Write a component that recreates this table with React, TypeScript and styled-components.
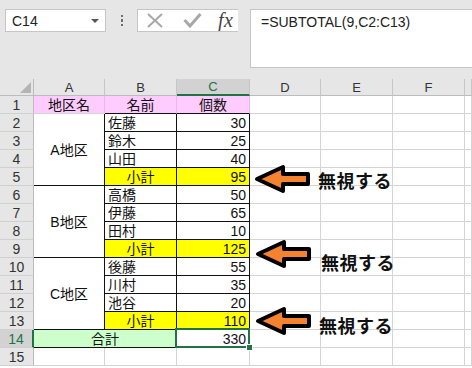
import React from 'react';
import styled, { createGlobalStyle } from 'styled-components';

const GlobalStyle = createGlobalStyle`
	html,
	body {
		margin: 0;
		padding: 0;
		background: #fff;
	}
	body {
		font-family: 'Liberation Sans', 'Noto Sans CJK JP', sans-serif;
	}
`;

const GRID = '#d4d4d4';
const INK = '#111';
const EXCEL_GREEN = '#217346';

const Page = styled.div`
	width: 472px;
	height: 368px;
	overflow: hidden;
	display: flex;
	flex-direction: column;
	background: #fff;
`;

/* ---------- formula bar ---------- */

const FormulaBar = styled.div`
	flex: none;
	height: 79px;
	box-sizing: border-box;
	background: #e6e6e6;
	display: flex;
	align-items: flex-start;
	padding: 9px 0 0 5px;
`;

const NameBox = styled.div`
	flex: none;
	width: 101px;
	height: 23px;
	box-sizing: border-box;
	background: #fff;
	border: 1px solid #c6c6c6;
	display: flex;
	align-items: center;
	justify-content: space-between;
	padding: 0 6px 0 6px;
	font-size: 14px;
	color: #222;
`;

const DropCaret = styled.span`
	width: 0;
	height: 0;
	border-left: 4px solid transparent;
	border-right: 4px solid transparent;
	border-top: 4px solid #555;
`;

const Grip = styled.div`
	flex: none;
	width: 31px;
	height: 23px;
	display: flex;
	flex-direction: column;
	align-items: center;
	justify-content: center;
	gap: 2px;

	span {
		width: 2px;
		height: 2.5px;
		background: #6e6e6e;
	}
`;

const ActionBox = styled.div`
	flex: none;
	width: 101px;
	height: 23px;
	box-sizing: border-box;
	background: #fff;
	border: 1px solid #c6c6c6;
	border-right: none;
	display: flex;
	align-items: center;
	padding-left: 9px;
	overflow: hidden;
`;

const ActionIcon = styled.svg<{ $gap: number }>`
	flex: none;
	margin-right: ${(p) => p.$gap}px;
`;

const FxMark = styled.span`
	font-family: 'Liberation Serif', serif;
	font-style: italic;
	font-size: 20px;
	line-height: 1;
	color: #444;
	letter-spacing: 0.5px;
	margin-top: -2px;
`;

const FormulaInput = styled.div`
	flex: none;
	width: 240px;
	height: 59px;
	margin-left: 12px;
	box-sizing: border-box;
	background: #fff;
	border: 1px solid #c6c6c6;
	padding: 4px 0 0 10px;
	font-size: 14px;
	line-height: 17px;
	color: #222;
`;

/* ---------- worksheet ---------- */

const SheetArea = styled.div`
	position: relative;
	flex: 1;
	overflow: hidden;
`;

const Grid = styled.div`
	display: grid;
	grid-template-columns: 34px 71px 72px 73px 71px 72px 72px 1fr;
	grid-template-rows: 17px repeat(15, 18px);
`;

const Corner = styled.div`
	position: relative;
	background: #e6e6e6;
	border-right: 1px solid #bcbcbc;
	border-bottom: 1px solid #bcbcbc;
	box-sizing: border-box;

	&::after {
		content: '';
		position: absolute;
		right: 2px;
		bottom: 2px;
		width: 0;
		height: 0;
		border-left: 11px solid transparent;
		border-bottom: 11px solid #b4b4b4;
	}
`;

const ColHead = styled.div<{ $active?: boolean }>`
	box-sizing: border-box;
	display: flex;
	align-items: center;
	justify-content: center;
	font-size: 13px;
	color: ${(p) => (p.$active ? EXCEL_GREEN : '#333')};
	background: ${(p) => (p.$active ? '#d2d2d2' : '#e6e6e6')};
	border-right: 1px solid #c6c6c6;
	border-bottom: ${(p) => (p.$active ? `2px solid ${EXCEL_GREEN}` : '1px solid #bcbcbc')};
`;

const RowHead = styled.div<{ $active?: boolean }>`
	box-sizing: border-box;
	display: flex;
	align-items: center;
	justify-content: center;
	padding-top: 1px;
	font-size: 14px;
	color: ${(p) => (p.$active ? EXCEL_GREEN : '#333')};
	background: ${(p) => (p.$active ? '#d2d2d2' : '#e6e6e6')};
	border-right: ${(p) => (p.$active ? `2px solid ${EXCEL_GREEN}` : '1px solid #bcbcbc')};
	border-bottom: 1px solid #d0d0d0;
`;

type Align = 'left' | 'center' | 'right';

const justify: Record<Align, string> = {
	left: 'flex-start',
	center: 'center',
	right: 'flex-end',
};

const Cell = styled.div<{
	$bg: string;
	$align: Align;
	$right: string;
	$bottom: string;
	$rows: number;
	$cols: number;
}>`
	grid-row: span ${(p) => p.$rows};
	grid-column: span ${(p) => p.$cols};
	box-sizing: border-box;
	display: flex;
	align-items: center;
	justify-content: ${(p) => justify[p.$align]};
	padding: 1px 3px 0 3px;
	background: ${(p) => p.$bg};
	border-right: 1px solid ${(p) => p.$right};
	border-bottom: 1px solid ${(p) => p.$bottom};
	font-size: 14px;
	line-height: 17px;
	color: ${INK};
	white-space: nowrap;
`;

const ActiveCell = styled(Cell)`
	position: relative;
	z-index: 2;

	&::after {
		content: '';
		position: absolute;
		top: -2px;
		left: -2px;
		right: -1px;
		bottom: -1px;
		border: 2px solid ${EXCEL_GREEN};
		pointer-events: none;
	}
	&::before {
		content: '';
		position: absolute;
		right: -4px;
		bottom: -4px;
		width: 5px;
		height: 5px;
		background: ${EXCEL_GREEN};
		border: 1px solid #fff;
		z-index: 1;
	}
`;

/* ---------- annotations ---------- */

const Callout = styled.div<{ $top: number; $left: number }>`
	position: absolute;
	top: ${(p) => p.$top}px;
	left: ${(p) => p.$left}px;
	display: flex;
	align-items: center;
`;

const CalloutLabel = styled.span<{ $gap: number; $drop: number }>`
	margin-left: ${(p) => p.$gap}px;
	margin-top: ${(p) => p.$drop * 2}px;
	font-family: 'Noto Sans CJK JP', sans-serif;
	font-weight: 700;
	font-size: 18px;
	line-height: 1;
	letter-spacing: 0.5px;
	color: #111;
`;

function LeftArrow() {
	return (
		<svg width='58' height='30' viewBox='0 0 58 30'>
			<polygon
				points='3,15 29,3 29,10 54,10 54,20 29,20 29,27'
				fill='#f4822f'
				stroke='#000'
				strokeWidth='4'
				strokeLinejoin='round'
			/>
		</svg>
	);
}

/* ---------- data ---------- */

type CellSpec = {
	text?: string;
	bg?: string;
	align?: Align;
	right?: string;
	bottom?: string;
	rows?: number;
	cols?: number;
	active?: boolean;
};

const PINK = '#ffccff';
const YELLOW = '#ffff00';
const MINT = '#ccffcc';

const header = (text: string, edge: string): CellSpec => ({
	text,
	bg: PINK,
	align: 'center',
	right: '#e8b8e8',
	bottom: edge,
});
const region = (text: string): CellSpec => ({ text, align: 'center', rows: 4, right: INK, bottom: INK });
const person = (text: string): CellSpec => ({ text, align: 'left', right: INK, bottom: INK });
const count = (text: string): CellSpec => ({ text, align: 'right', right: INK, bottom: INK });
const subtotalLabel: CellSpec = { text: '小計', bg: YELLOW, align: 'center', right: INK, bottom: INK };
const subtotal = (text: string): CellSpec => ({ text, bg: YELLOW, align: 'right', right: INK, bottom: INK });

const tableRows: CellSpec[][] = [
	[header('地区名', GRID), header('名前', INK), header('個数', INK)],
	[region('A地区'), person('佐藤'), count('30')],
	[person('鈴木'), count('25')],
	[person('山田'), count('40')],
	[subtotalLabel, subtotal('95')],
	[region('B地区'), person('高橋'), count('50')],
	[person('伊藤'), count('65')],
	[person('田村'), count('10')],
	[subtotalLabel, subtotal('125')],
	[region('C地区'), person('後藤'), count('55')],
	[person('川村'), count('35')],
	[person('池谷'), count('20')],
	[subtotalLabel, subtotal('110')],
	[
		{ text: '合計', bg: MINT, align: 'center', cols: 2, right: INK, bottom: INK },
		{ text: '330', align: 'right', right: INK, bottom: INK, active: true },
	],
	[],
];

// the G column only peeks in at the right edge, so its letter is off-screen
const columns = ['A', 'B', 'C', 'D', 'E', 'F', ''];
const ACTIVE_COL = 'C';
const ACTIVE_ROW = 14;

function Sheet() {
	const cells: React.ReactNode[] = [<Corner key='corner' />];
	columns.forEach((c, i) =>
		cells.push(
			<ColHead key={`h${i}`} $active={c === ACTIVE_COL}>
				{c}
			</ColHead>,
		),
	);

	tableRows.forEach((row, i) => {
		const n = i + 1;
		cells.push(
			<RowHead key={`r${n}`} $active={n === ACTIVE_ROW}>
				{n}
			</RowHead>,
		);
		row.forEach((spec, j) => {
			const Comp = spec.active ? ActiveCell : Cell;
			cells.push(
				<Comp
					key={`c${n}-${j}`}
					$bg={spec.bg ?? '#fff'}
					$align={spec.align ?? 'left'}
					$right={spec.right ?? GRID}
					$bottom={spec.bottom ?? GRID}
					$rows={spec.rows ?? 1}
					$cols={spec.cols ?? 1}
				>
					{spec.text}
				</Comp>,
			);
		});
		// blank columns D..G (A..G on the empty row)
		const blanks = row.length === 0 ? 7 : 4;
		for (let k = 0; k < blanks; k++) {
			cells.push(
				<Cell key={`e${n}-${k}`} $bg='#fff' $align='left' $right={GRID} $bottom={GRID} $rows={1} $cols={1} />,
			);
		}
	});

	return <Grid>{cells}</Grid>;
}

const notes = [
	{ top: 85, left: 254, gap: 6, drop: 1 },
	{ top: 158, left: 255, gap: 8, drop: 8 },
	{ top: 227, left: 255, gap: 6, drop: 4 },
];

export default function App(): JSX.Element {
	return (
		<Page>
			<GlobalStyle />
			<FormulaBar>
				<NameBox>
					C14
					<DropCaret />
				</NameBox>
				<Grip>
					<span />
					<span />
					<span />
				</Grip>
				<ActionBox>
					<ActionIcon $gap={20} width='16' height='15' viewBox='0 0 16 15'>
						<path d='M1 1 L15 14 M15 1 L1 14' stroke='#a8a8a8' strokeWidth='2' fill='none' />
					</ActionIcon>
					<ActionIcon $gap={16} width='19' height='15' viewBox='0 0 19 15'>
						<path d='M1.5 7 L7 13 L17.5 1' stroke='#a8a8a8' strokeWidth='3' fill='none' />
					</ActionIcon>
					<FxMark>fx</FxMark>
				</ActionBox>
				<FormulaInput>=SUBTOTAL(9,C2:C13)</FormulaInput>
			</FormulaBar>
			<SheetArea>
				<Sheet />
				{notes.map((n, i) => (
					<Callout key={i} $top={n.top} $left={n.left}>
						<LeftArrow />
						<CalloutLabel $gap={n.gap} $drop={n.drop}>
							無視する
						</CalloutLabel>
					</Callout>
				))}
			</SheetArea>
		</Page>
	);
}
